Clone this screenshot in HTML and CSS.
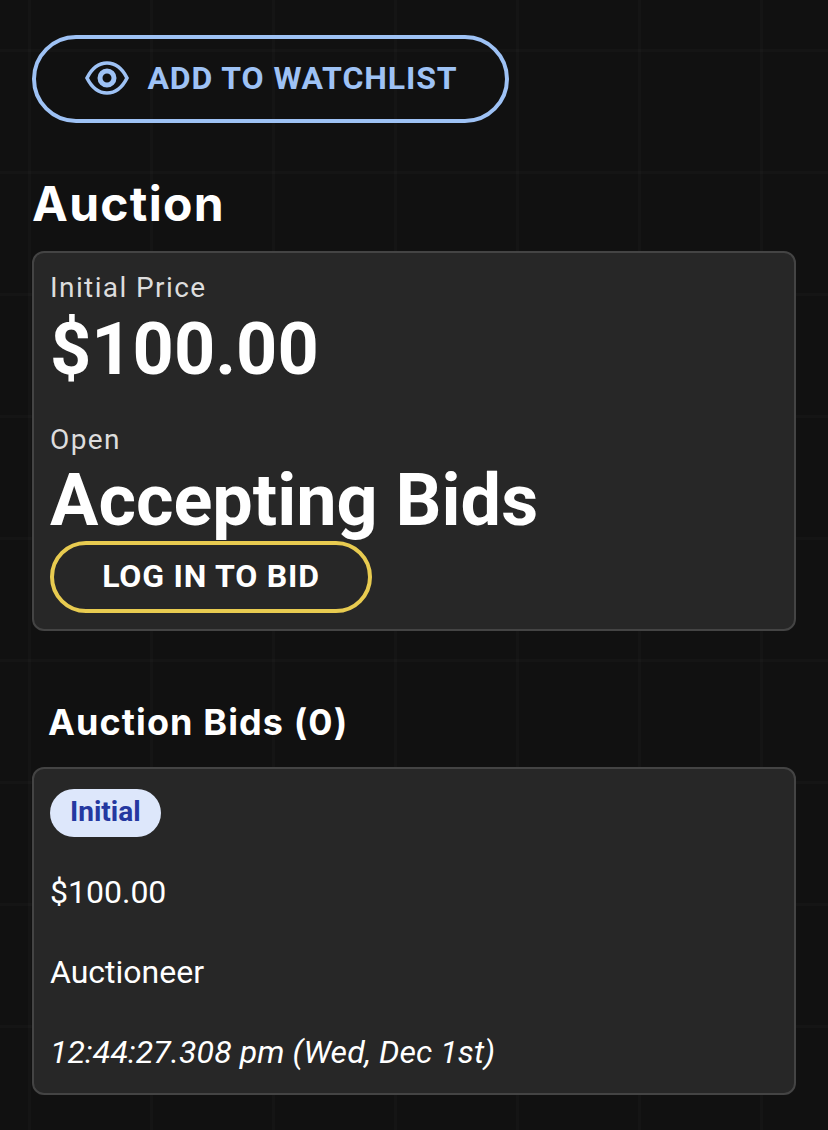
FILE: index.html
```html
<!DOCTYPE html>
<html lang="en">
<head>
	<meta charset="UTF-8">
	<title>Auction</title>
	<link rel="stylesheet" href="styles.css">
</head>
<body>
	<div class="page">
		<button class="watch_btn">
			<svg class="eye" viewBox="0 0 44 34"><path d="M2 17C7 7 14 2 22 2s15 5 20 15C37 27 30 32 22 32S7 27 2 17z"/><circle cx="22" cy="17" r="7"/></svg>
			ADD TO WATCHLIST
		</button>

		<h1 class="title">Auction</h1>

		<div class="card auction_card">
			<div class="label">Initial Price</div>
			<div class="price">$100.00</div>
			<div class="label open_label">Open</div>
			<div class="status">Accepting Bids</div>
			<button class="login_btn">LOG IN TO BID</button>
		</div>

		<h2 class="bids_title">Auction Bids (0)</h2>

		<div class="card bid_card">
			<span class="chip">Initial</span>
			<p class="bid_line">$100.00</p>
			<p class="bid_line">Auctioneer</p>
			<p class="bid_line bid_time">12:44:27.308 pm (Wed, Dec 1st)</p>
		</div>
	</div>
</body>
</html>
```

FILE: styles.css
```css
* { margin: 0; padding: 0; box-sizing: border-box; }

html, body { height: 100%; }

body {
	background-color: #111;
	/* faint grid behind the page */
	background-image:
		linear-gradient(90deg, rgba(255,255,255,0.016) 0 3px, transparent 3px),
		linear-gradient(0deg, rgba(255,255,255,0.016) 0 3px, transparent 3px);
	background-size: 122px 122px;
	background-position: 28px 0, 0 52px;
	font-family: Roboto, "Liberation Sans", sans-serif;
	color: #fff;
	overflow: hidden;
}

.page { padding: 35px 32px 0; }

button { font-family: inherit; background: none; cursor: pointer; }

/* watchlist */
.watch_btn {
	display: flex;
	align-items: center;
	justify-content: center;
	gap: 18px;
	width: 477px;
	height: 88px;
	padding: 0 0 2px 2px;
	border: 4px solid #9ec2f5;
	border-radius: 44px;
	color: #9ec2f5;
	font-size: 32px;
	font-weight: 700;
	letter-spacing: 0.9px;
}
.eye {
	width: 44px;
	height: 34px;
	fill: none;
	stroke: #9ec2f5;
	stroke-width: 3.6;
}
.eye circle { stroke-width: 5; }

.title {
	margin-top: 51px;
	font-family: Inter, Roboto, sans-serif;
	font-size: 48px;
	line-height: 60px;
	font-weight: 700;
	letter-spacing: 1.3px;
}

.card {
	background: #272727;
	border: 2px solid #444;
	border-radius: 12px;
	padding: 0 16px;
}

.auction_card { margin-top: 17px; height: 380px; padding-top: 19px; }

.label {
	font-size: 28px;
	line-height: 32px;
	letter-spacing: 1.4px;
	color: #ddd;
}
.price {
	margin-top: 6px;
	font-size: 72px;
	line-height: 80px;
	font-weight: 700;
}
.open_label { margin-top: 34px; }
.status {
	margin-top: 2px;
	font-size: 72px;
	line-height: 86px;
	font-weight: 700;
}
.login_btn {
	display: block;
	width: 322px;
	height: 72px;
	margin-top: -3px;
	padding-bottom: 2px;
	border: 4px solid #e8cb50;
	border-radius: 36px;
	color: #fff;
	font-size: 32px;
	font-weight: 700;
	letter-spacing: 0.8px;
}

.bids_title {
	margin: 69px 0 0 16px;
	font-family: Inter, Roboto, sans-serif;
	font-size: 36px;
	line-height: 44px;
	font-weight: 700;
	letter-spacing: 1.1px;
}

.bid_card { margin-top: 23px; height: 328px; padding-top: 20px; }

.chip {
	display: inline-block;
	height: 48px;
	margin-bottom: -2px;
	padding: 0 20px;
	border-radius: 24px;
	background: #dde7fb;
	color: #2438a0;
	font-size: 28px;
	line-height: 46px;
	font-weight: 700;
}
.bid_line {
	margin-top: 34px;
	font-size: 32px;
	line-height: 46px;
}
.bid_time { font-style: italic; letter-spacing: 0.1px; }
```
